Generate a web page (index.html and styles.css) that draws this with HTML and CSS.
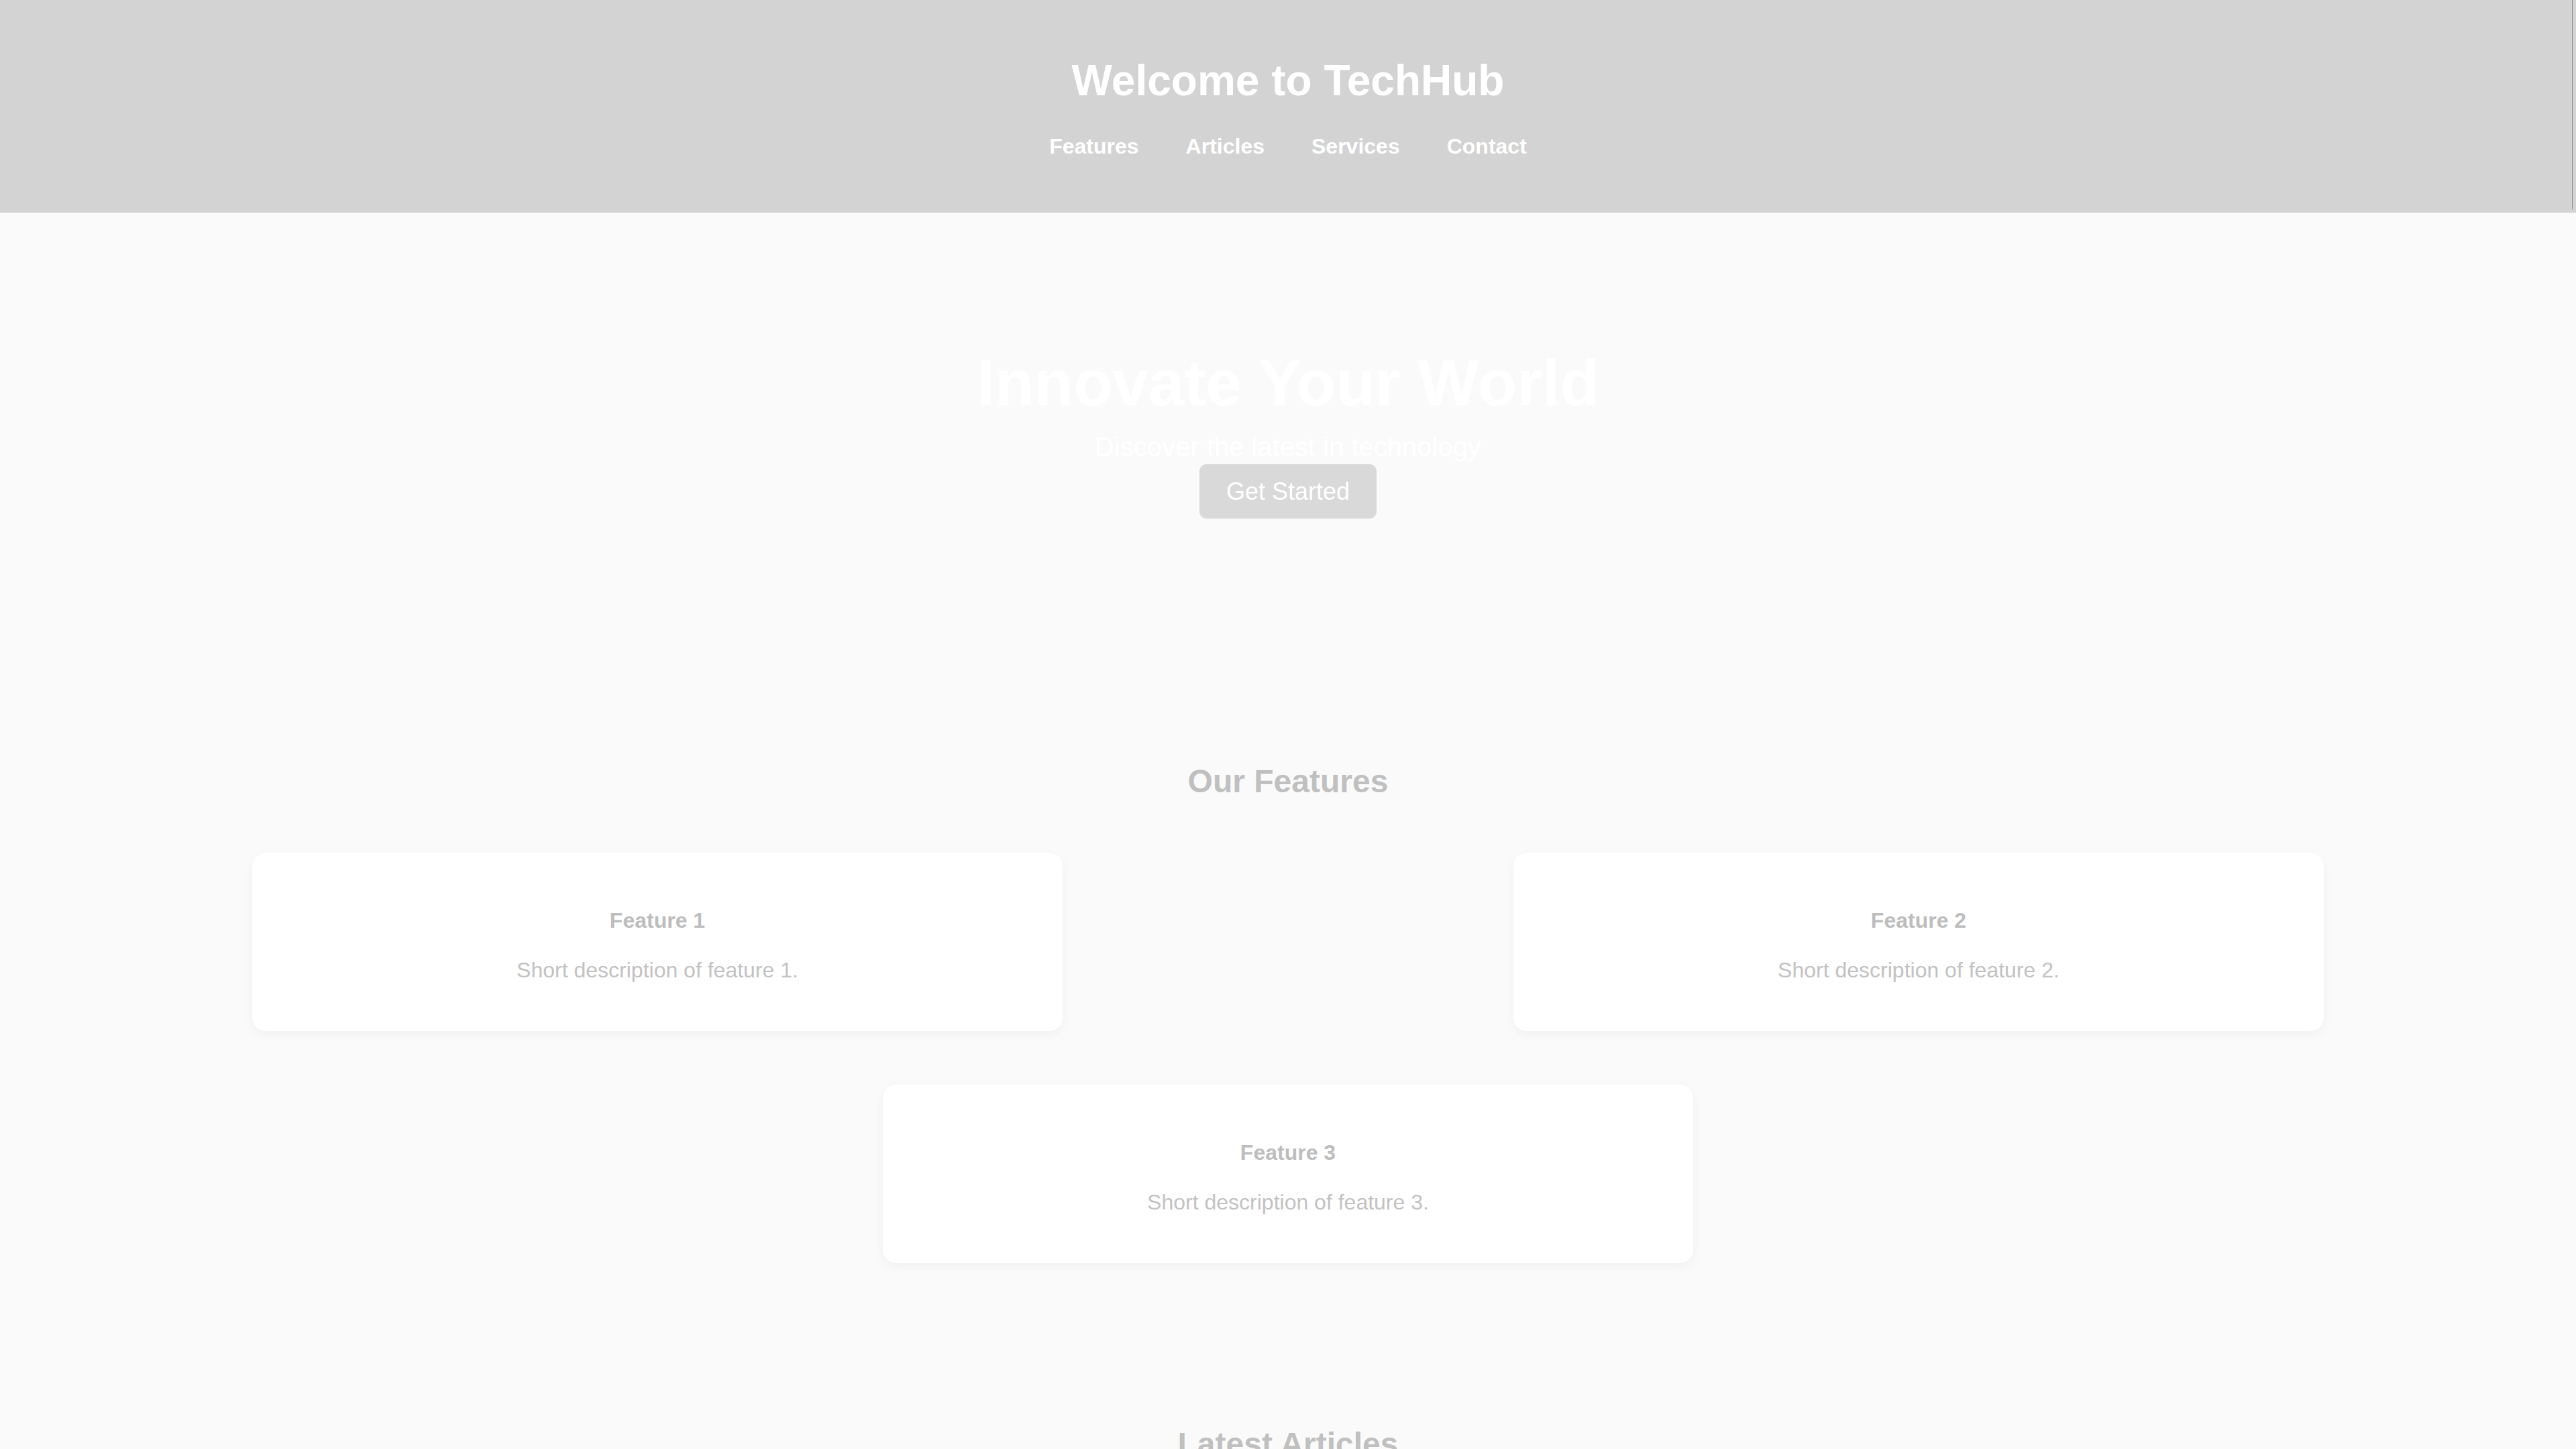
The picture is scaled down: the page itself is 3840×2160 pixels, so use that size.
FILE: index.html
```html
<!DOCTYPE html>
<html lang="en">
<head>
<meta charset="utf-8">
<title>TechHub</title>
<link rel="stylesheet" href="styles.css">
</head>
<body>
<header class="site-header">
  <h1 class="site-title">Welcome to TechHub</h1>
  <nav class="site-nav">
    <a href="#features">Features</a>
    <a href="#articles">Articles</a>
    <a href="#services">Services</a>
    <a href="#contact">Contact</a>
  </nav>
</header>
<main>
  <section class="hero">
    <h2 class="hero-title">Innovate Your World</h2>
    <p class="hero-sub">Discover the latest in technology</p>
    <a class="hero-btn" href="#features">Get Started</a>
  </section>
  <section class="features" id="features">
    <h2 class="section-title">Our Features</h2>
    <div class="feature-grid">
      <div class="card">
        <h3>Feature 1</h3>
        <p>Short description of feature 1.</p>
      </div>
      <div class="card">
        <h3>Feature 2</h3>
        <p>Short description of feature 2.</p>
      </div>
      <div class="card">
        <h3>Feature 3</h3>
        <p>Short description of feature 3.</p>
      </div>
    </div>
  </section>
  <section class="articles" id="articles">
    <h2 class="section-title">Latest Articles</h2>
  </section>
</main>
</body>
</html>
```
FILE: styles.css
```css
html, body {
  margin: 0;
  padding: 0;
}
body {
  background: #fafafa;
  font-family: "Liberation Sans", Arial, sans-serif;
  color: #c0c0c0;
  overflow: hidden;
}
.site-header {
  position: relative;
  background: #d3d3d3;
  padding: 84px 0 81px;
  text-align: center;
}
.site-header::after {
  content: "";
  position: absolute;
  top: 0;
  right: 5px;
  width: 1px;
  height: 312px;
  background: #8c8c8c;
}
.site-title {
  margin: 0 0 44px;
  font-size: 64px;
  line-height: 72px;
  font-weight: 700;
  color: #ffffff;
}
.site-nav {
  display: flex;
  justify-content: center;
  gap: 70px;
  line-height: 36px;
}
.site-nav a {
  color: #ffffff;
  font-size: 32px;
  font-weight: 700;
  text-decoration: none;
}
.hero {
  display: flex;
  flex-direction: column;
  align-items: center;
  padding: 200px 0 200px;
  text-align: center;
}
.hero-title {
  margin: 0 0 20px;
  font-size: 96px;
  line-height: 107px;
  font-weight: 700;
  color: #ffffff;
}
.hero-sub {
  margin: 0 0 3px;
  font-size: 40px;
  line-height: 45px;
  color: #ffffff;
}
.hero-btn {
  display: inline-block;
  padding: 20px 40px;
  font-size: 36px;
  line-height: 41px;
  color: #ffffff;
  background: #d9d9d9;
  border-radius: 10px;
  text-decoration: none;
}
.features {
  padding: 165px 0 38px;
}
.section-title {
  margin: 0 0 39px;
  text-align: center;
  font-size: 48px;
  line-height: 54px;
  font-weight: 700;
  color: #c0c0c0;
}
.feature-grid {
  display: flex;
  flex-wrap: wrap;
  justify-content: space-around;
  padding: 0 40px;
}
.card {
  width: 30%;
  padding: 40px;
  margin: 40px;
  background: #ffffff;
  border-radius: 20px;
  box-shadow: 0 5px 16px rgba(0, 0, 0, 0.045);
  text-align: center;
}
.card h3 {
  margin: 43px 0 0;
  font-size: 32px;
  line-height: 37px;
  font-weight: 700;
  color: #bdbdbd;
}
.card p {
  margin: 37px 0 32px;
  font-size: 32px;
  line-height: 37px;
  color: #c2c2c2;
}
.articles {
  padding: 165px 0 80px;
}
```
